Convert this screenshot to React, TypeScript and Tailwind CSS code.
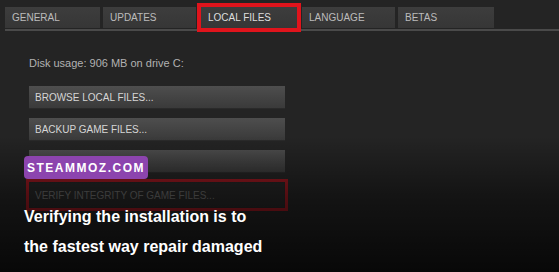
import React from "react";

const tabs = [
  { label: "GENERAL", w: "w-[95px]" },
  { label: "UPDATES", w: "w-[93px]" },
  { label: "LOCAL FILES", w: "w-[96px]", active: true },
  { label: "LANGUAGE", w: "w-[93px]" },
  { label: "BETAS", w: "w-[96px]" },
];

function Btn({ children }: { children?: React.ReactNode }) {
  return (
    <div className="h-[23px] w-[256px] flex items-center pl-[6px] bg-gradient-to-b from-[#4e4e4e] to-[#3a3a3a] border-b border-[#2a2a2a] text-[10px] text-[#d6d6d6]">
      {children}
    </div>
  );
}

export default function App() {
  return (
    <div
      className="relative w-[559px] h-[272px] overflow-hidden bg-[#242424]"
      style={{ fontFamily: '"Liberation Sans", Arial, sans-serif' }}
    >
      {/* tabs */}
      <div className="pt-[7px] pl-[5px] flex gap-[3px]">
        {tabs.map((t) => (
          <div
            key={t.label}
            className={`relative h-[21px] ${t.w} flex items-center pl-[7px] text-[10px] text-[#bcbcbc] bg-gradient-to-b from-[#3d3d3d] to-[#363636] ${
              t.active ? "mx-[2px] text-[#dedede]" : ""
            }`}
          >
            {t.label}
            {t.active && (
              <span className="absolute -left-[4px] -right-[4px] -top-[4px] -bottom-[4px] border-[4px] border-[#e0141c]" />
            )}
          </div>
        ))}
      </div>
      <div className="ml-[5px] h-[2px] bg-[#4a4a4a] mt-[1px]" />

      {/* content */}
      <div className="pl-[29px] pt-[26px] flex flex-col">
        <div className="text-[11px] text-[#b2b2b2] leading-[13px]">Disk usage: 906 MB on drive C:</div>
        <div className="mt-[16px] flex flex-col gap-[9px]">
          <Btn>BROWSE LOCAL FILES...</Btn>
          <Btn>BACKUP GAME FILES...</Btn>
          <Btn />
        </div>
        <div className="mt-[6px] -ml-[3px] w-[262px] h-[32px] border-[3px] border-[#961820] p-[1px] flex">
          <div className="flex-1 bg-[#262626] flex items-center pl-[5px] text-[10px] text-[#6a6a6a]">
            VERIFY INTEGRITY OF GAME FILES...
          </div>
        </div>
      </div>

      {/* darkening gradient overlay */}
      <div className="absolute inset-0 bg-gradient-to-b from-transparent from-[50%] via-[rgba(0,0,0,0.45)] via-[72%] to-[rgba(0,0,0,0.78)] pointer-events-none" />

      {/* badge */}
      <div className="absolute left-[24px] top-[156px] w-[124px] h-[23px] rounded-[4px] bg-[#8c44ae] flex items-center justify-center text-white font-bold text-[12px] tracking-[1.5px]">
        STEAMMOZ.COM
      </div>

      {/* caption */}
      <div className="absolute left-[24px] top-[202px] text-white font-bold text-[16px] leading-[30px]">
        <div>Verifying the installation is to</div>
        <div>the fastest way repair damaged</div>
      </div>
    </div>
  );
}
